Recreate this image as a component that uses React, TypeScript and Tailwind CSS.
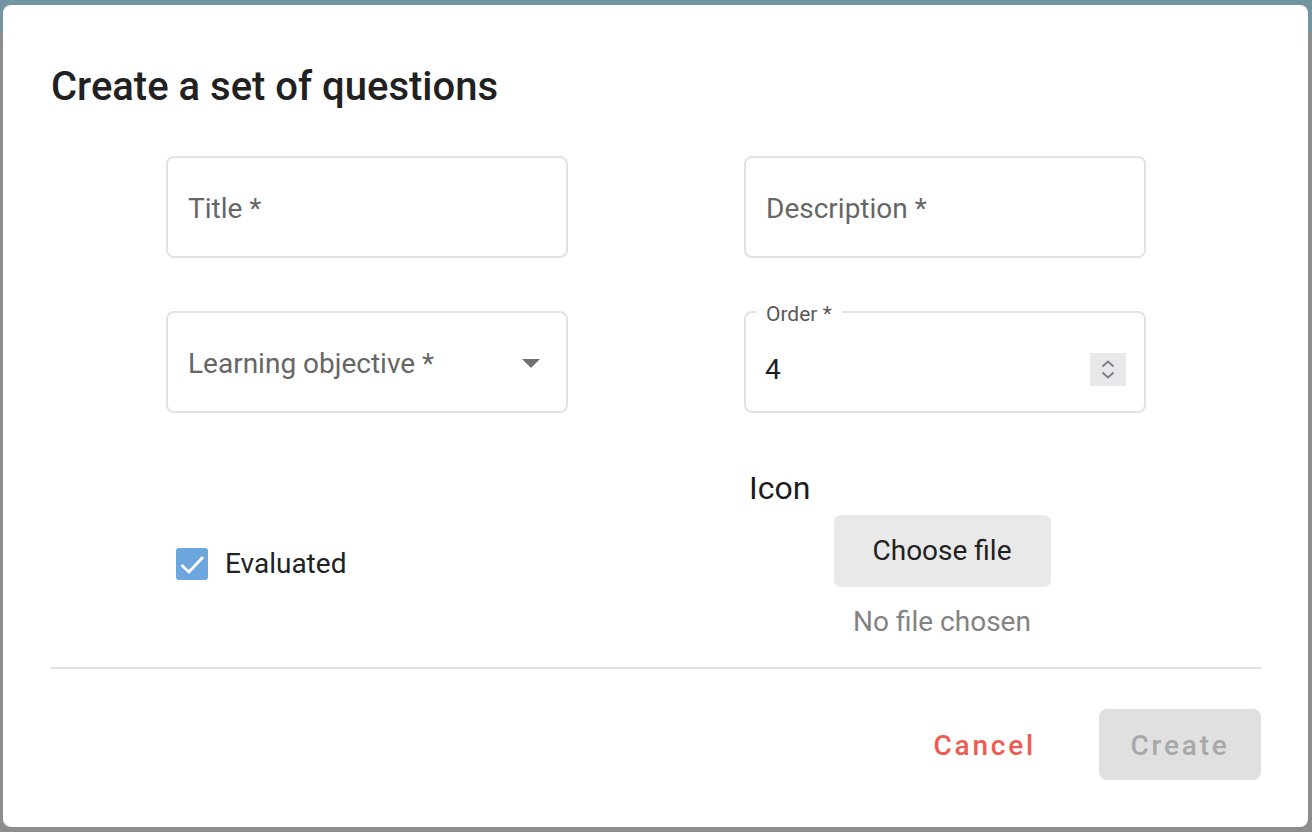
import React from 'react'

const Field: React.FC<{ label: string; children?: React.ReactNode }> = ({ label, children }) => {
  return (
    <div className="h-[102px] rounded-[8px] border-2 border-[#e2e2e2] flex items-center pl-[20px] pr-[26px] pt-[3px]">
      <span className="flex-1 text-[28px] leading-[34px] text-[#666666]">{label}</span>
      {children}
    </div>
  )
}

const OrderField: React.FC = () => {
  return (
    <div className="relative h-[102px] rounded-[8px] border-2 border-[#e2e2e2] flex items-center pl-[19px] pr-[18px] pt-[14px]">
      <span className="absolute left-[10px] top-[-11px] bg-white px-[10px] text-[21px] leading-[24px] text-[#595959]">
        Order *
      </span>
      <span className="flex-1 mt-[2px] text-[28px] leading-[34px] text-[#1f1f1f]">4</span>
      <div className="w-[36px] h-[33px] bg-[#e8e8ea] flex flex-col items-center justify-center gap-[3px]">
        <svg width="14" height="8" viewBox="0 0 14 8" fill="none">
          <path d="M1.5 6.5 L7 1.5 L12.5 6.5" stroke="#7b7b86" strokeWidth="1.8" />
        </svg>
        <svg width="14" height="8" viewBox="0 0 14 8" fill="none">
          <path d="M1.5 1.5 L7 6.5 L12.5 1.5" stroke="#7b7b86" strokeWidth="1.8" />
        </svg>
      </div>
    </div>
  )
}

export default function App() {
  return (
    <div className="relative h-[832px] w-full overflow-hidden bg-[#8d8d8d] font-[Roboto,sans-serif]">
      <div className="h-[33px] bg-[#7395a0]" />

      <div className="absolute left-[3px] top-[5px] w-[1305px] h-[822px] rounded-[8px] bg-white flex flex-col pl-[48px] pr-[47px] pt-[58px] pb-[47px]">
        <h1 className="text-[40px] leading-[48px] font-medium text-[#212121]">
          Create a set of questions
        </h1>

        <div className="mt-[45px] ml-[115px] grid grid-cols-[402px_402px] gap-x-[176px] gap-y-[53px]">
          <Field label="Title *" />
          <Field label="Description *" />
          <Field label="Learning objective *">
            <svg width="18" height="10" viewBox="0 0 18 10">
              <path d="M0 0 L18 0 L9 9 Z" fill="#707070" />
            </svg>
          </Field>
          <OrderField />

          <div className="mt-[3px] pt-[78px] pl-[10px] flex items-start">
            <div className="flex items-center gap-[17px]">
              <div className="w-[32px] h-[32px] rounded-[3px] bg-[#6ca6df] flex items-center justify-center">
                <svg width="32" height="32" viewBox="0 0 32 32" fill="none">
                  <path d="M5.5 17 L13 24 L27 9" stroke="white" strokeWidth="3" />
                </svg>
              </div>
              <span className="text-[28px] leading-[34px] text-[#222222]">Evaluated</span>
            </div>
          </div>

          <div className="mt-[3px] flex flex-col">
            <span className="pl-[5px] text-[32px] leading-[38px] text-[#1c1c1c]">Icon</span>
            <div className="flex flex-col items-center pr-[6px]">
              <button className="mt-[8px] w-[217px] h-[72px] rounded-[7px] bg-[#e9e9e9] text-[28px] text-[#212121]">
                Choose file
              </button>
              <span className="mt-[18px] text-[28px] leading-[34px] text-[#828282]">No file chosen</span>
            </div>
          </div>
        </div>

        <div className="mt-[28px] h-[2px] bg-[#e0e0e0]" />

        <div className="mt-[40px] flex justify-end items-center">
          <button className="px-[16px] h-[71px] pt-[2px] text-[28px] font-medium tracking-[0.1em] text-[#ef5a53]">
            Cancel
          </button>
          <button className="ml-[47px] w-[162px] h-[71px] pt-[2px] rounded-[8px] bg-[#e0e0e0] text-[28px] font-medium tracking-[0.1em] text-[#a8a8a8]">
            Create
          </button>
        </div>
      </div>
    </div>
  )
}
